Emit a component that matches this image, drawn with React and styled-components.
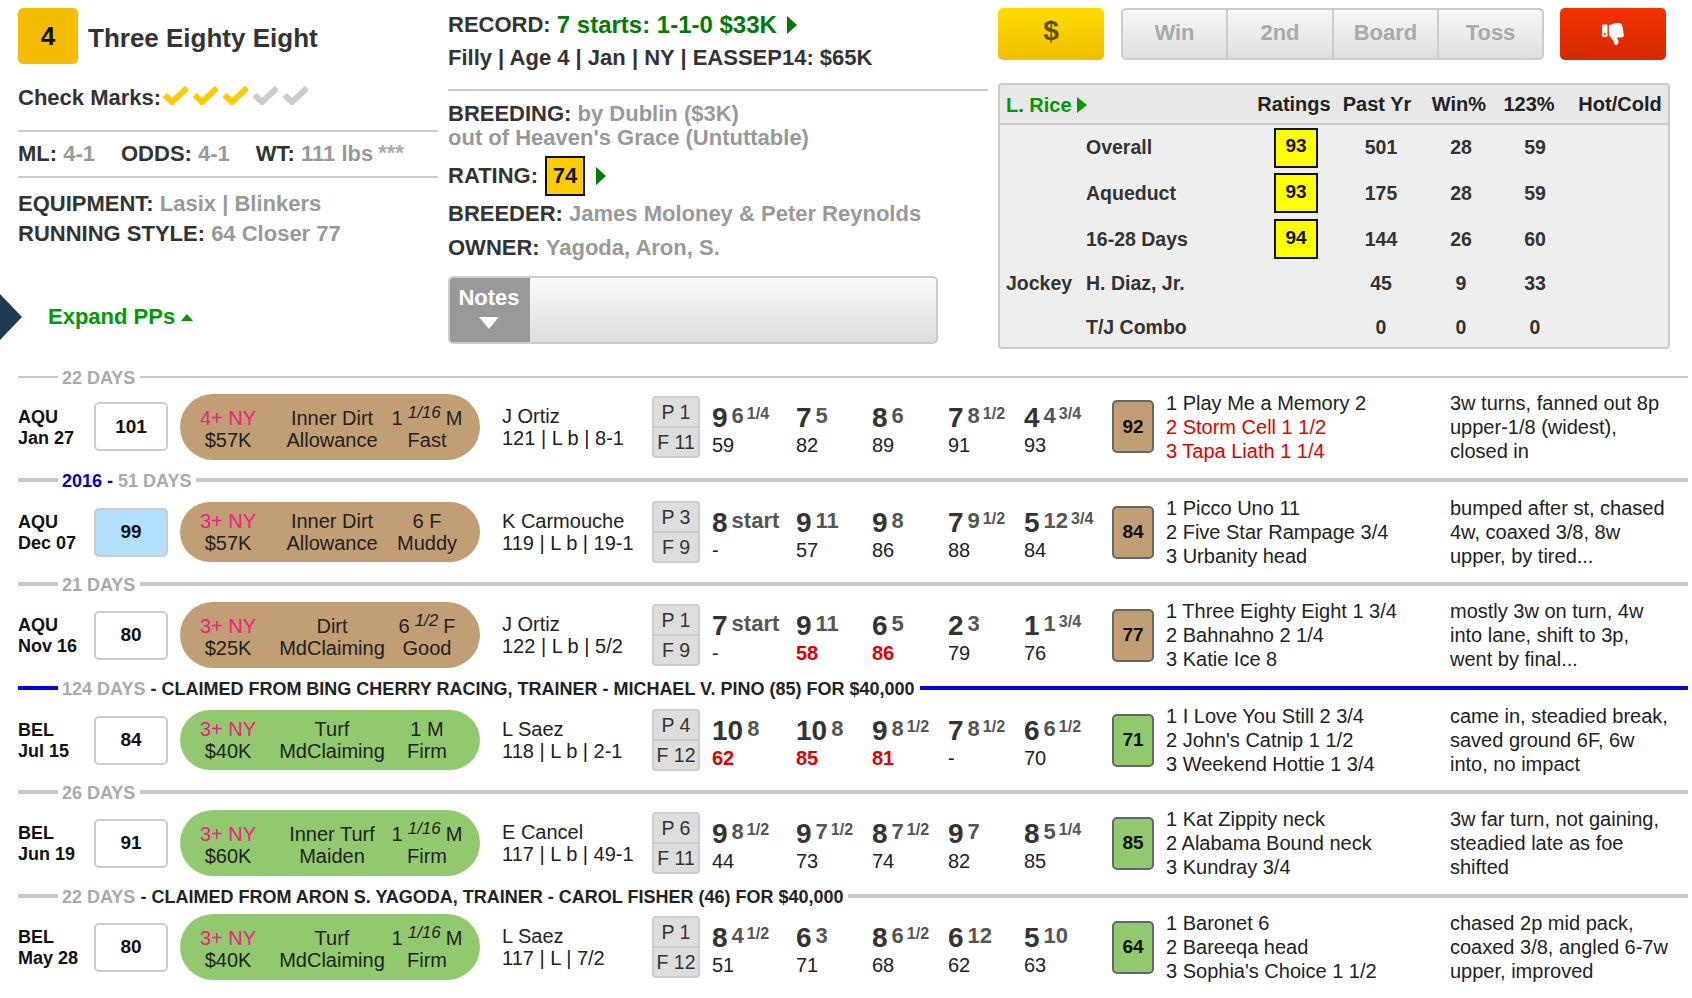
import React from 'react';
import styled, { createGlobalStyle } from 'styled-components';
import { FaThumbsDown } from 'react-icons/fa';

const GlobalStyle = createGlobalStyle`
  html, body {
    margin: 0;
    padding: 0;
    background: #fff;
    font-family: "Liberation Sans", Arial, sans-serif;
    color: #333;
  }
  * { box-sizing: border-box; }
`;

const Page = styled.div`
  position: relative;
  width: 1692px;
  height: 998px;
  overflow: hidden;
  padding: 8px 4px 0 18px;
`;

const Header = styled.div`
  display: grid;
  grid-template-columns: 430px 550px 672px;
  height: 358px;
`;

const Column = styled.div`
  display: flex;
  flex-direction: column;
`;

const TitleRow = styled.div`
  display: flex;
  align-items: center;
  height: 56px;
`;

const PostBadge = styled.div`
  width: 60px;
  height: 56px;
  border-radius: 5px;
  background: #f5bd00;
  color: #111;
  font-size: 26px;
  font-weight: bold;
  display: flex;
  align-items: center;
  justify-content: center;
`;

const HorseName = styled.h1`
  margin: 0 0 0 10px;
  padding-top: 5px;
  font-size: 26px;
  font-weight: bold;
  color: #333;
`;

const Line = styled.div`
  font-size: 22px;
  font-weight: bold;
  color: #333;
  line-height: ${(p) => p.$h || 28}px;
  margin-top: ${(p) => p.$mt || 0}px;
  display: flex;
  align-items: center;
  white-space: pre;
`;

const Muted = styled.span`
  color: #999;
`;

const Stars = styled.span`
  color: #aaa;
  font-size: 22px;
  margin-left: 5px;
  align-self: flex-start;
  line-height: 22px;
`;

const Rule = styled.div`
  height: 2px;
  background: #ccc;
  margin-top: ${(p) => p.$mt}px;
  width: ${(p) => p.$w}px;
`;

const CheckRow = styled.span`
  display: inline-flex;
  gap: 5px;
  margin-left: 2px;
  margin-top: -6px;
`;

const OddsItem = styled.span`
  margin-right: 26px;
`;

const Diamond = styled.div`
  position: absolute;
  left: 0;
  top: 294px;
  width: 22px;
  height: 46px;
  background: #1d3a52;
  clip-path: polygon(0 0, 100% 50%, 0 100%);
`;

const ExpandLink = styled.div`
  margin: 54px 0 0 30px;
  font-size: 22px;
  font-weight: bold;
  line-height: 28px;
  color: #009900;
  display: flex;
  align-items: center;
`;

const TriUp = styled.span`
  margin-left: 6px;
  border-left: 6px solid transparent;
  border-right: 6px solid transparent;
  border-bottom: 7px solid #009900;
`;

const TriRight = styled.span`
  display: inline-block;
  margin-left: ${(p) => p.$ml || 8}px;
  border-top: ${(p) => p.$s || 9}px solid transparent;
  border-bottom: ${(p) => p.$s || 9}px solid transparent;
  border-left: 10px solid ${(p) => p.$c || '#007a00'};
`;

const GreenText = styled.span`
  color: #007a00;
  font-size: 24px;
`;

const RatingBox = styled.span`
  width: 40px;
  height: 40px;
  margin-left: 7px;
  border: 2px solid #111;
  background: #ffcc00;
  color: #111;
  display: inline-flex;
  align-items: center;
  justify-content: center;
`;

const Notes = styled.div`
  width: 490px;
  height: 68px;
  margin-top: 14px;
  display: flex;
  border: 2px solid #ccc;
  border-radius: 5px;
  background: linear-gradient(#fbfbfb, #dcdcdc);
  overflow: hidden;
`;

const NotesTab = styled.div`
  width: 82px;
  margin: -2px 0 -2px -2px;
  padding-top: 9px;
  background: #999;
  color: #fff;
  font-size: 22px;
  font-weight: bold;
  line-height: 26px;
  display: flex;
  flex-direction: column;
  align-items: center;
  gap: 6px;
`;

const TriDown = styled.span`
  border-left: 10px solid transparent;
  border-right: 10px solid transparent;
  border-top: 12px solid #fff;
`;

const ButtonBar = styled.div`
  display: flex;
  gap: 16px;
  height: 52px;
`;

const ActionButton = styled.div`
  width: 106px;
  border-radius: 5px;
  display: flex;
  align-items: center;
  justify-content: center;
  padding-bottom: ${(p) => p.$pb || 0}px;
  font-size: 28px;
  font-weight: bold;
  color: ${(p) => p.$color};
  background: linear-gradient(${(p) => p.$from}, ${(p) => p.$to});
`;

const DollarSlot = styled(ActionButton)`
  margin-right: 1px;
`;

const BetGroup = styled.div`
  width: 423px;
  display: grid;
  grid-template-columns: 103px 106px 105px 1fr;
  border: 2px solid #ccc;
  border-radius: 5px;
  background: linear-gradient(#f8f8f8, #dedede);
`;

const BetCell = styled.div`
  display: flex;
  align-items: center;
  justify-content: center;
  padding-bottom: 2px;
  font-size: 22px;
  font-weight: bold;
  color: #aaa;
  border-left: ${(p) => (p.$first ? 'none' : '2px solid #ccc')};
`;

const StatsTable = styled.div`
  margin-top: 23px;
  width: 672px;
  height: 266px;
  border: 2px solid #ccc;
  border-radius: 4px;
  background: #eee;
  overflow: hidden;
`;

const StatsHead = styled.div`
  display: grid;
  grid-template-columns: 80px 166px 84px 82px 82px 58px 124px;
  align-items: center;
  padding-left: 6px;
  height: 40px;
  background: #e8e8e8;
  border-bottom: 2px solid #ccc;
  font-size: 20px;
  font-weight: bold;
  color: #222;
`;

const StatsRow = styled.div`
  display: grid;
  grid-template-columns: 80px 166px 88px 82px 78px 70px 1fr;
  align-items: center;
  padding-left: 6px;
  height: ${(p) => p.$h}px;
  font-size: 19.5px;
  font-weight: bold;
  color: #333;
`;

const Cell = styled.div`
  text-align: center;
  white-space: nowrap;
`;

const TrainerLink = styled.div`
  grid-column: 1 / 3;
  padding-top: 2px;
  color: #009900;
  display: flex;
  align-items: center;
`;

const YellowBox = styled.div`
  width: 44px;
  height: 40px;
  margin: 0 auto;
  border: 2px solid #111;
  background: #ffff00;
  color: #111;
  font-size: 19px;
  display: flex;
  align-items: center;
  justify-content: center;
  padding-bottom: 3px;
`;

const Divider = styled.div`
  display: flex;
  align-items: center;
  height: 22px;
`;

const DividerLabel = styled.div`
  padding-top: 2px;
  font-size: 18px;
  font-weight: bold;
  white-space: pre;
  color: #aaa;
`;

const DividerLine = styled.div`
  height: ${(p) => p.$t}px;
  background: ${(p) => p.$c};
  width: ${(p) => (p.$grow ? 'auto' : '40px')};
  flex: ${(p) => (p.$grow ? 1 : 'none')};
  margin: ${(p) => (p.$grow ? '0 0 0 5px' : '0 4px 0 0')};
`;

const BlueText = styled.span`
  color: #0000cc;
`;

const ClaimText = styled.span`
  color: #222;
`;

const Race = styled.div`
  display: grid;
  grid-template-columns: 76px 86px 322px 150px 60px 400px 54px 284px 1fr;
  align-items: center;
  height: ${(p) => (p.$first ? 81 : 82)}px;
  padding-bottom: ${(p) => p.$pad || 0}px;
`;

const TrackCell = styled.div`
  padding-top: 2px;
  font-size: 18px;
  font-weight: bold;
  line-height: 21px;
  color: #111;
`;

const SpeedBox = styled.div`
  width: 74px;
  height: 49px;
  border: 2px solid #ccc;
  border-radius: 5px;
  background: ${(p) => (p.$blue ? '#b3e0ff' : '#fff')};
  display: flex;
  align-items: center;
  justify-content: center;
  font-size: 19px;
  font-weight: bold;
  color: #111;
`;

const RacePill = styled.div`
  width: 300px;
  height: ${(p) => (p.$tall ? 66 : 60)}px;
  padding-top: ${(p) => (p.$tall ? 13 : 8)}px;
  border-radius: 33px;
  background: ${(p) => (p.$turf ? '#92c96e' : '#c19e74')};
  display: grid;
  grid-template-columns: 96px 112px 78px;
  grid-auto-rows: 22px;
  font-size: 20px;
  line-height: 22px;
  color: #222;
  text-align: center;
  white-space: nowrap;
`;

const Pink = styled.span`
  color: #ee2288;
`;

const Dist = styled.i`
  font-size: 17px;
  line-height: 0;
  vertical-align: 7px;
  margin: 0 5px 0 5px;
`;

const Jockey = styled.div`
  font-size: 20px;
  line-height: 22px;
  color: #222;
  white-space: nowrap;
`;

const PostBox = styled.div`
  width: 48px;
  height: 62px;
  display: grid;
  grid-template-rows: 1fr 1fr;
  border: 2px solid #ccc;
  border-radius: 4px;
  background: #ddd;
  font-size: 19.5px;
  color: #333;
  text-align: center;
  line-height: 28px;
  white-space: nowrap;
`;

const PostSplit = styled.div`
  border-top: ${(p) => (p.$second ? '2px solid #ccc' : 'none')};
`;

const Calls = styled.div`
  display: grid;
  grid-template-columns: 84px 76px 76px 76px 88px;
  padding-top: 6px;
`;

const CallTop = styled.div`
  height: 30px;
  line-height: 30px;
  white-space: nowrap;
  font-weight: bold;
  color: #555;
`;

const CallPos = styled.span`
  font-size: 28px;
  line-height: 1;
  color: #333;
`;

const CallLen = styled.span`
  font-size: 22px;
  line-height: 1;
  margin-left: 4px;
  vertical-align: 4px;
`;

const CallFrac = styled.span`
  font-size: 16px;
  line-height: 1;
  margin-left: 3px;
  vertical-align: 8px;
`;

const CallBeat = styled.div`
  height: 22px;
  line-height: 22px;
  font-size: 20px;
  font-weight: ${(p) => (p.$red ? 'bold' : 'normal')};
  color: ${(p) => (p.$red ? '#dd0000' : '#222')};
`;

const FinalBox = styled.div`
  width: 42px;
  height: 53px;
  border: 2px solid #666;
  border-radius: 5px;
  background: ${(p) => (p.$turf ? '#92c96e' : '#c19e74')};
  display: flex;
  align-items: center;
  justify-content: center;
  font-size: 19px;
  font-weight: bold;
  color: #111;
`;

const TextLines = styled.div`
  font-size: 20px;
  line-height: 24px;
  color: #222;
  white-space: nowrap;
`;

const LineText = styled.div`
  color: ${(p) => (p.$red ? '#dd0000' : 'inherit')};
`;

const Check = ({ color }) => (
  <svg width="25" height="20" viewBox="0 0 25 20">
    <path d="M1.5 10 L9 17 L24 3" fill="none" stroke={color} strokeWidth="6" />
  </svg>
);

const stats = [
  { h: 45, name: 'Overall', rating: 93, yr: 501, win: 28, top: 59 },
  { h: 46, name: 'Aqueduct', rating: 93, yr: 175, win: 28, top: 59 },
  { h: 46, name: '16-28 Days', rating: 94, yr: 144, win: 26, top: 60 },
  { h: 43, label: 'Jockey', name: 'H. Diaz, Jr.', yr: 45, win: 9, top: 33 },
  { h: 45, name: 'T/J Combo', yr: 0, win: 0, top: 0 },
];

const races = [
  {
    first: true, pad: 4,
    gap: { thin: true, days: '22 DAYS' },
    track: 'AQU', date: 'Jan 27', speed: 101,
    age: '4+ NY', purse: '$57K', surface: 'Inner Dirt', type: 'Allowance',
    dist: ['1', '1/16', 'M'], cond: 'Fast',
    jockey: 'J Ortiz', info: '121 | L b | 8-1', post: 'P 1', field: 'F 11',
    calls: [['9', '6', '1/4', '59'], ['7', '5', '', '82'], ['8', '6', '', '89'], ['7', '8', '1/2', '91'], ['4', '4', '3/4', '93']],
    final: 92,
    finish: [['1 Play Me a Memory 2'], ['2 Storm Cell 1 1/2', true], ['3 Tapa Liath 1 1/4', true]],
    comment: ['3w turns, fanned out 8p', 'upper-1/8 (widest),', 'closed in'],
  },
  {
    gap: { year: '2016 - ', days: '51 DAYS' },
    track: 'AQU', date: 'Dec 07', speed: 99, blue: true,
    age: '3+ NY', purse: '$57K', surface: 'Inner Dirt', type: 'Allowance',
    dist: ['6 F'], cond: 'Muddy',
    jockey: 'K Carmouche', info: '119 | L b | 19-1', post: 'P 3', field: 'F 9',
    calls: [['8', 'start', '', '-'], ['9', '11', '', '57'], ['9', '8', '', '86'], ['7', '9', '1/2', '88'], ['5', '12', '3/4', '84']],
    final: 84,
    finish: [['1 Picco Uno 11'], ['2 Five Star Rampage 3/4'], ['3 Urbanity head']],
    comment: ['bumped after st, chased', '4w, coaxed 3/8, 8w', 'upper, by tired...'],
  },
  {
    pad: 2,
    gap: { days: '21 DAYS' },
    track: 'AQU', date: 'Nov 16', speed: 80,
    age: '3+ NY', purse: '$25K', surface: 'Dirt', type: 'MdClaiming',
    dist: ['6', '1/2', 'F'], cond: 'Good',
    jockey: 'J Ortiz', info: '122 | L b | 5/2', post: 'P 1', field: 'F 9',
    calls: [['7', 'start', '', '-'], ['9', '11', '', '58', true], ['6', '5', '', '86', true], ['2', '3', '', '79'], ['1', '1', '3/4', '76']],
    final: 77,
    finish: [['1 Three Eighty Eight 1 3/4'], ['2 Bahnahno 2 1/4'], ['3 Katie Ice 8']],
    comment: ['mostly 3w on turn, 4w', 'into lane, shift to 3p,', 'went by final...'],
  },
  {
    gap: { blue: true, days: '124 DAYS', claim: ' - CLAIMED FROM BING CHERRY RACING, TRAINER - MICHAEL V. PINO (85) FOR $40,000' },
    turf: true, track: 'BEL', date: 'Jul 15', speed: 84,
    age: '3+ NY', purse: '$40K', surface: 'Turf', type: 'MdClaiming',
    dist: ['1 M'], cond: 'Firm',
    jockey: 'L Saez', info: '118 | L b | 2-1', post: 'P 4', field: 'F 12',
    calls: [['10', '8', '', '62', true], ['10', '8', '', '85', true], ['9', '8', '1/2', '81', true], ['7', '8', '1/2', '-'], ['6', '6', '1/2', '70']],
    final: 71,
    finish: [['1 I Love You Still 2 3/4'], ["2 John's Catnip 1 1/2"], ['3 Weekend Hottie 1 3/4']],
    comment: ['came in, steadied break,', 'saved ground 6F, 6w', 'into, no impact'],
  },
  {
    pad: 2,
    gap: { days: '26 DAYS' },
    turf: true, track: 'BEL', date: 'Jun 19', speed: 91,
    age: '3+ NY', purse: '$60K', surface: 'Inner Turf', type: 'Maiden',
    dist: ['1', '1/16', 'M'], cond: 'Firm',
    jockey: 'E Cancel', info: '117 | L b | 49-1', post: 'P 6', field: 'F 11',
    calls: [['9', '8', '1/2', '44'], ['9', '7', '1/2', '73'], ['8', '7', '1/2', '74'], ['9', '7', '', '82'], ['8', '5', '1/4', '85']],
    final: 85,
    finish: [['1 Kat Zippity neck'], ['2 Alabama Bound neck'], ['3 Kundray 3/4']],
    comment: ['3w far turn, not gaining,', 'steadied late as foe', 'shifted'],
  },
  {
    pad: 2,
    gap: { days: '22 DAYS', claim: ' - CLAIMED FROM ARON S. YAGODA, TRAINER - CAROL FISHER (46) FOR $40,000' },
    turf: true, track: 'BEL', date: 'May 28', speed: 80,
    age: '3+ NY', purse: '$40K', surface: 'Turf', type: 'MdClaiming',
    dist: ['1', '1/16', 'M'], cond: 'Firm',
    jockey: 'L Saez', info: '117 | L | 7/2', post: 'P 1', field: 'F 12',
    calls: [['8', '4', '1/2', '51'], ['6', '3', '', '71'], ['8', '6', '1/2', '68'], ['6', '12', '', '62'], ['5', '10', '', '63']],
    final: 64,
    finish: [['1 Baronet 6'], ['2 Bareeqa head'], ["3 Sophia's Choice 1 1/2"]],
    comment: ['chased 2p mid pack,', 'coaxed 3/8, angled 6-7w', 'upper, improved'],
  },
];

const GapDivider = ({ gap }) => {
  const color = gap.blue ? '#0000dd' : '#c8c8c8';
  const thick = gap.thin ? 2 : 4;
  return (
    <Divider>
      <DividerLine $t={thick} $c={color} />
      <DividerLabel>
        {gap.year && <BlueText>{gap.year}</BlueText>}
        {gap.days}
        {gap.claim && <ClaimText>{gap.claim}</ClaimText>}
      </DividerLabel>
      <DividerLine $t={thick} $c={color} $grow />
    </Divider>
  );
};

const RaceRow = ({ r }) => (
  <Race $first={r.first} $pad={r.pad}>
    <TrackCell>
      <div>{r.track}</div>
      <div>{r.date}</div>
    </TrackCell>
    <SpeedBox $blue={r.blue}>{r.speed}</SpeedBox>
    <RacePill $turf={r.turf} $tall={r.dist.length > 1}>
      <div><Pink>{r.age}</Pink></div>
      <div>{r.surface}</div>
      <div>
        {r.dist[0]}
        {r.dist[1] && <Dist>{r.dist[1]}</Dist>}
        {r.dist[2]}
      </div>
      <div>{r.purse}</div>
      <div>{r.type}</div>
      <div>{r.cond}</div>
    </RacePill>
    <Jockey>
      <div>{r.jockey}</div>
      <div>{r.info}</div>
    </Jockey>
    <PostBox>
      <PostSplit>{r.post}</PostSplit>
      <PostSplit $second>{r.field}</PostSplit>
    </PostBox>
    <Calls>
      {r.calls.map(([pos, len, frac, beat, red], i) => (
        <div key={i}>
          <CallTop>
            <CallPos>{pos}</CallPos>
            <CallLen>{len}</CallLen>
            {frac && <CallFrac>{frac}</CallFrac>}
          </CallTop>
          <CallBeat $red={red}>{beat}</CallBeat>
        </div>
      ))}
    </Calls>
    <FinalBox $turf={r.turf}>{r.final}</FinalBox>
    <TextLines>
      {r.finish.map(([text, red]) => (
        <LineText key={text} $red={red}>{text}</LineText>
      ))}
    </TextLines>
    <TextLines>
      {r.comment.map((text) => (
        <LineText key={text}>{text}</LineText>
      ))}
    </TextLines>
  </Race>
);

const App = () => (
  <Page>
    <GlobalStyle />
    <Diamond />
    <Header>
      <Column>
        <TitleRow>
          <PostBadge>4</PostBadge>
          <HorseName>Three Eighty Eight</HorseName>
        </TitleRow>
        <Line $h={24} $mt={22}>
          Check Marks:
          <CheckRow>
            <Check color="#ffcc00" />
            <Check color="#ffcc00" />
            <Check color="#ffcc00" />
            <Check color="#cccccc" />
            <Check color="#cccccc" />
          </CheckRow>
        </Line>
        <Rule $mt={20} $w={420} />
        <Line $h={24} $mt={10}>
          <OddsItem>ML: <Muted>4-1</Muted></OddsItem>
          <OddsItem>ODDS: <Muted>4-1</Muted></OddsItem>
          WT: <Muted>111 lbs</Muted>
          <Stars>***</Stars>
        </Line>
        <Rule $mt={10} $w={420} />
        <Line $h={30} $mt={11}>EQUIPMENT: <Muted>Lasix | Blinkers</Muted></Line>
        <Line $h={30}>RUNNING STYLE: <Muted>64 Closer 77</Muted></Line>
        <ExpandLink>Expand PPs<TriUp /></ExpandLink>
      </Column>

      <Column>
        <Line $mt={3}>
          RECORD: <GreenText>7 starts: 1-1-0 $33K</GreenText>
          <TriRight $ml={10} />
        </Line>
        <Line $mt={5}>Filly | Age 4 | Jan | NY | EASSEP14: $65K</Line>
        <Rule $mt={17} $w={540} />
        <Line $h={24} $mt={11}>BREEDING: <Muted>by Dublin ($3K)</Muted></Line>
        <Line $h={24}><Muted>out of Heaven's Grace (Untuttable)</Muted></Line>
        <Line $h={40} $mt={6}>
          RATING:
          <RatingBox>74</RatingBox>
          <TriRight $ml={11} />
        </Line>
        <Line $mt={4}>BREEDER: <Muted>James Moloney &amp; Peter Reynolds</Muted></Line>
        <Line $mt={6}>OWNER: <Muted>Yagoda, Aron, S.</Muted></Line>
        <Notes>
          <NotesTab>
            Notes
            <TriDown />
          </NotesTab>
        </Notes>
      </Column>

      <Column>
        <ButtonBar>
          <DollarSlot $from="#ffdb00" $to="#eec000" $color="#5c5410" $pb={6}>$</DollarSlot>
          <BetGroup>
            <BetCell $first>Win</BetCell>
            <BetCell>2nd</BetCell>
            <BetCell>Board</BetCell>
            <BetCell>Toss</BetCell>
          </BetGroup>
          <ActionButton $from="#f53000" $to="#d42a00" $color="#fff">
            <FaThumbsDown size={22} />
          </ActionButton>
        </ButtonBar>
        <StatsTable>
          <StatsHead>
            <TrainerLink>L. Rice<TriRight $ml={5} $s={8} $c="#009900" /></TrainerLink>
            <Cell>Ratings</Cell>
            <Cell>Past Yr</Cell>
            <Cell>Win%</Cell>
            <Cell>123%</Cell>
            <Cell>Hot/Cold</Cell>
          </StatsHead>
          {stats.map((s) => (
            <StatsRow key={s.name} $h={s.h}>
              <div>{s.label}</div>
              <div>{s.name}</div>
              <div>{s.rating && <YellowBox>{s.rating}</YellowBox>}</div>
              <Cell>{s.yr}</Cell>
              <Cell>{s.win}</Cell>
              <Cell>{s.top}</Cell>
              <div />
            </StatsRow>
          ))}
        </StatsTable>
      </Column>
    </Header>

    {races.map((r) => (
      <React.Fragment key={r.date}>
        <GapDivider gap={r.gap} />
        <RaceRow r={r} />
      </React.Fragment>
    ))}
  </Page>
);

export default App;
